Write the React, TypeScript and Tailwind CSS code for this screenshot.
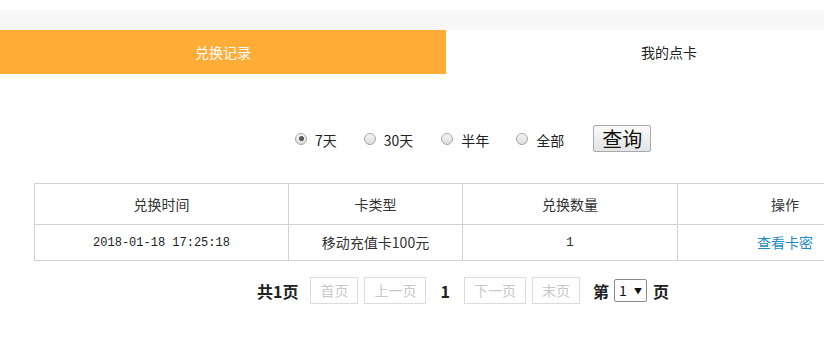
import React from "react";

const Radio = ({ checked }: { checked?: boolean }) => (
  <span className="inline-flex items-center justify-center w-[12px] h-[12px] rounded-full border border-[#a8a8a8] bg-gradient-to-b from-[#f4f4f4] to-[#dcdcdc]">
    {checked && <span className="w-[5px] h-[5px] rounded-full bg-[#555]" />}
  </span>
);

export default function App() {
  const font = "font-['Noto_Sans_CJK_SC','Noto_Sans',sans-serif]";
  const opts = [
    { label: "7天", checked: true, gap: "mr-[27px]" },
    { label: "30天", gap: "mr-[28px]" },
    { label: "半年", gap: "mr-[27px]" },
    { label: "全部", gap: "mr-[29px]" },
  ];
  return (
    <div className={`w-[824px] h-[350px] overflow-hidden bg-white text-[#333] ${font}`}>
      <div className="w-[892px]">
        <div className="h-[10px]" />
        <div className="h-[20px] bg-[#f7f7f7]" />
        <div className="flex h-[44px] text-[14px]">
          <div className="w-1/2 bg-[#ffad37] text-white flex items-center justify-center">兑换记录</div>
          <div className="w-1/2 bg-white text-[#222] flex items-center justify-center">我的点卡</div>
        </div>
        <div className="mt-[51px] h-[27px] flex items-center pl-[295px] text-[14px] text-[#222]">
          {opts.map((o) => (
            <label key={o.label} className={`flex items-center ${o.gap}`}>
              <Radio checked={o.checked} />
              <span className="ml-[8px] leading-none pt-[3px]">{o.label}</span>
            </label>
          ))}
          <button className="h-[27px] w-[58px] border border-[#a9a9a9] rounded-[2px] bg-gradient-to-b from-[#fbfbfb] to-[#e3e3e3] text-[20px] leading-none text-[#111] flex items-center justify-center">
            查询
          </button>
        </div>
        <table className="mt-[31px] ml-[34px] w-[858px] border-collapse text-[14px] text-[#333] table-fixed">
          <colgroup>
            <col className="w-[254px]" />
            <col className="w-[174px]" />
            <col className="w-[215px]" />
            <col className="w-[215px]" />
          </colgroup>
          <thead>
            <tr className="h-[41px]">
              {["兑换时间", "卡类型", "兑换数量", "操作"].map((h) => (
                <th key={h} className="border border-[#d2d2d2] font-normal text-center">{h}</th>
              ))}
            </tr>
          </thead>
          <tbody>
            <tr className="h-[36px]">
              <td className="border border-[#d2d2d2] text-center font-['Liberation_Mono',monospace] text-[12px] text-[#222]">2018-01-18 17:25:18</td>
              <td className="border border-[#d2d2d2] text-center">移动充值卡100元</td>
              <td className="border border-[#d2d2d2] text-center font-['Liberation_Mono',monospace] text-[13px]">1</td>
              <td className="border border-[#d2d2d2] text-center text-[#1e8bc3]">查看卡密</td>
            </tr>
          </tbody>
        </table>
        <div className="mt-[16px] ml-[34px] w-[858px] flex items-center justify-center text-[14px]">
          <span className="font-bold text-[16px] text-[#222] mr-[12px]">共1页</span>
          <span className="h-[27px] px-[9px] border border-[#dcdcdc] text-[#c8c8c8] flex items-center mr-[6px]">首页</span>
          <span className="h-[27px] px-[9px] border border-[#dcdcdc] text-[#c8c8c8] flex items-center">上一页</span>
          <span className="font-bold text-[16px] text-[#222] mx-[14px]">1</span>
          <span className="h-[27px] px-[9px] border border-[#dcdcdc] text-[#c8c8c8] flex items-center mr-[6px]">下一页</span>
          <span className="h-[27px] px-[9px] border border-[#dcdcdc] text-[#c8c8c8] flex items-center">末页</span>
          <span className="font-bold text-[16px] text-[#222] ml-[13px]">第</span>
          <span className="ml-[5px] h-[23px] w-[33px] border border-[#8a8a8a] rounded-[2px] flex items-center justify-between px-[4px] text-[14px] text-[#111]">
            <span>1</span>
            <span className="text-[8px]">▼</span>
          </span>
          <span className="font-bold text-[16px] text-[#222] ml-[6px]">页</span>
        </div>
      </div>
    </div>
  );
}
